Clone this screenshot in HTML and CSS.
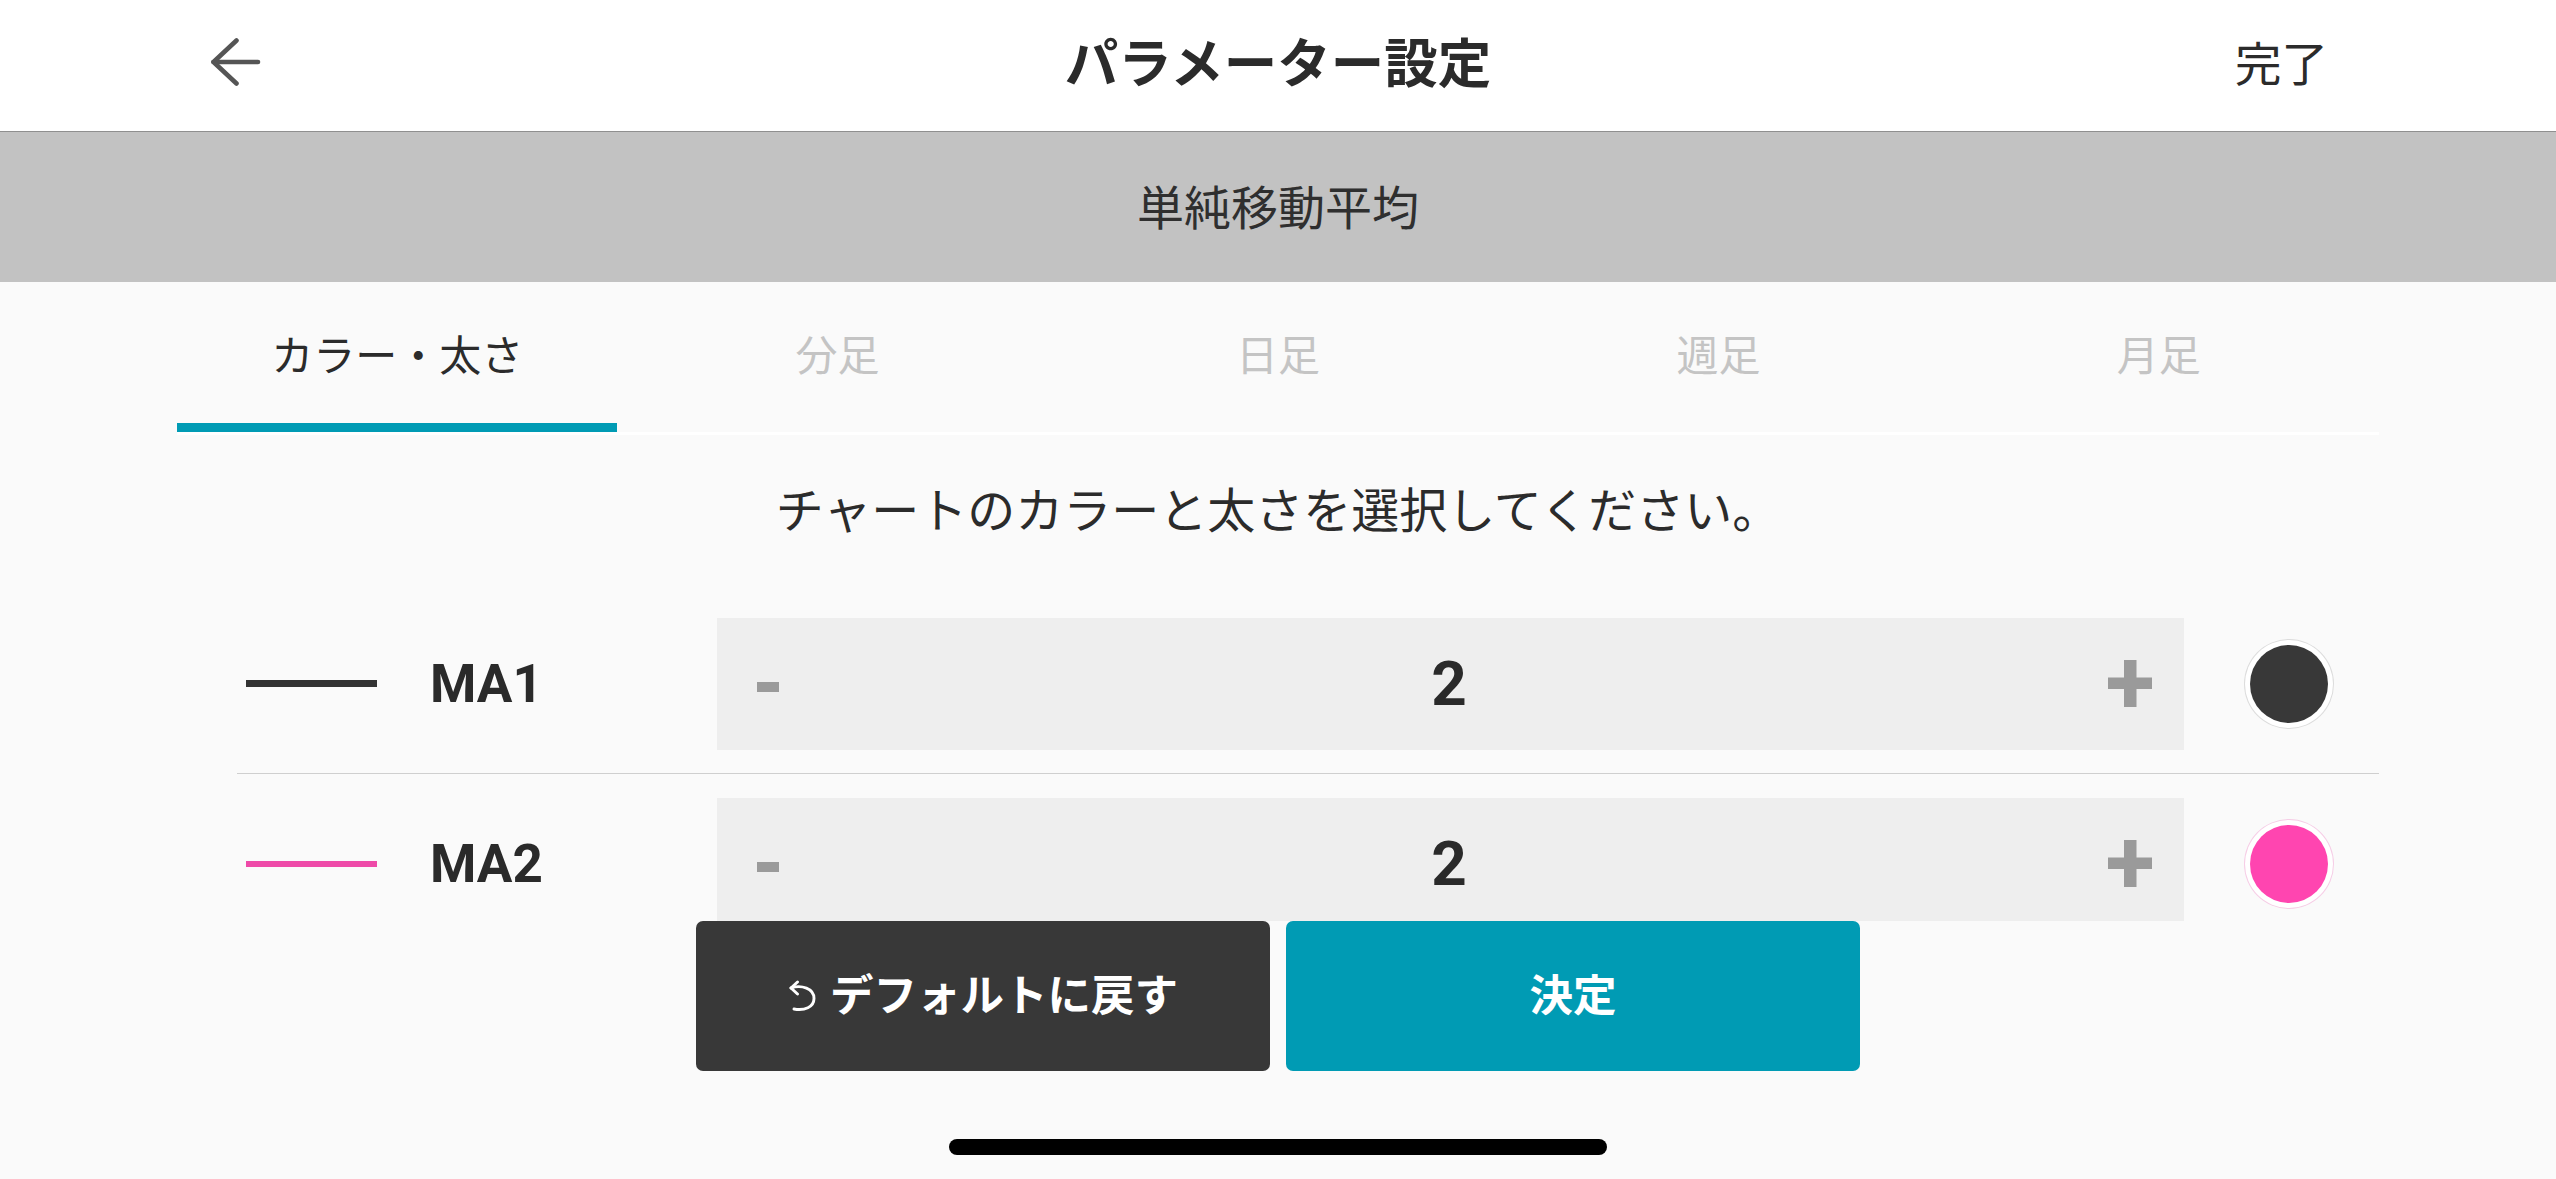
FILE: index.html
```html
<!DOCTYPE html>
<html lang="ja">
<head>
<meta charset="utf-8">
<title>パラメーター設定</title>
<link rel="stylesheet" href="styles.css">
</head>
<body>
<div class="screen">
  <header class="nav">
    <div class="nav-left">
      <svg class="back" width="50" height="50" viewBox="0 0 50 50" fill="none" stroke="#555" stroke-width="4.6" stroke-linecap="round" stroke-linejoin="round">
        <path d="M2.5 24H47"/>
        <path d="M25.5 2.5L2.5 24L25.5 45.5"/>
      </svg>
    </div>
    <h1 class="nav-title">パラメーター設定</h1>
    <div class="nav-right">完了</div>
  </header>

  <div class="band"><span class="band-text">単純移動平均</span></div>

  <main class="content">
    <nav class="tabs">
      <div class="tab active"><span class="tab-label">カラー・太さ</span></div>
      <div class="tab"><span class="tab-label">分足</span></div>
      <div class="tab"><span class="tab-label">日足</span></div>
      <div class="tab"><span class="tab-label">週足</span></div>
      <div class="tab"><span class="tab-label">月足</span></div>
    </nav>

    <p class="hint">チャートのカラーと太さを選択してください。</p>

    <div class="rows">
      <div class="row">
        <span class="swatch swatch-dark"></span>
        <span class="ma">MA1</span>
        <div class="stepper">
          <svg class="minus" width="22" height="10" viewBox="0 0 22 10"><rect width="22" height="10" fill="#9a9a9a"/></svg>
          <span class="value">2</span>
          <svg class="plus" width="44" height="47" viewBox="0 0 44 47"><rect x="0" y="17.5" width="44" height="11.5" fill="#9a9a9a"/><rect x="16" y="0" width="12.5" height="47" fill="#9a9a9a"/></svg>
        </div>
        <span class="dot dot-dark"></span>
      </div>
      <div class="row">
        <span class="swatch swatch-pink"></span>
        <span class="ma">MA2</span>
        <div class="stepper">
          <svg class="minus" width="22" height="10" viewBox="0 0 22 10"><rect width="22" height="10" fill="#9a9a9a"/></svg>
          <span class="value">2</span>
          <svg class="plus" width="44" height="47" viewBox="0 0 44 47"><rect x="0" y="17.5" width="44" height="11.5" fill="#9a9a9a"/><rect x="16" y="0" width="12.5" height="47" fill="#9a9a9a"/></svg>
        </div>
        <span class="dot dot-pink"></span>
      </div>
    </div>
  </main>

  <footer class="footer">
    <div class="actions">
      <button class="btn btn-reset">
        <svg class="reset-icon" width="28" height="32" viewBox="0 0 28 32" fill="none" stroke="#fff" stroke-width="2.9" stroke-linecap="round" stroke-linejoin="round">
          <path d="M3 8C13.5 4.5 26 8.5 26 18.5C26 27 16.5 31 6 29"/>
          <path d="M9.5 2L3 8L9.5 14"/>
        </svg>
        <span class="btn-label">デフォルトに戻す</span>
      </button>
      <button class="btn btn-ok"><span class="btn-label">決定</span></button>
    </div>
    <div class="home-bar"></div>
  </footer>
</div>
</body>
</html>
```

FILE: styles.css
```css
* {
  box-sizing: border-box;
}

html, body {
  margin: 0;
  padding: 0;
}

body {
  width: 2556px;
  height: 1179px;
  overflow: hidden;
  background: #fafafa;
  font-family: "Noto Sans CJK JP", "Noto Sans", sans-serif;
  color: #333;
}

.screen {
  display: flex;
  flex-direction: column;
  height: 1179px;
}

/* Header */
.nav {
  height: 132px;
  background: #fff;
  border-bottom: 1px solid #8f8f8f;
  display: grid;
  grid-template-columns: 1fr auto 1fr;
  align-items: center;
  flex: none;
}

.nav-left {
  padding-left: 211px;
  display: flex;
  align-items: center;
}

.back {
  display: block;
  margin-top: -6px;
}

.nav-title {
  margin: -12px 0 0;
  font-size: 53.5px;
  font-weight: 700;
  color: #2b2b2b;
  line-height: 1;
}

.nav-right {
  justify-self: end;
  padding-right: 228px;
  font-size: 46.5px;
  color: #2b2b2b;
  line-height: 1;
  margin-top: -8px;
}

/* Gray band */
.band {
  height: 150px;
  background: #c2c2c2;
  display: flex;
  align-items: center;
  justify-content: center;
  flex: none;
}

.band-text {
  font-size: 47px;
  line-height: 1;
  color: #2f2f2f;
  margin-top: -5px;
}

/* Scroll content */
.content {
  height: 639px;
  overflow: hidden;
  flex: none;
}

.tabs {
  margin: 0 177px;
  display: grid;
  grid-template-columns: repeat(5, 1fr);
  border-bottom: 3px solid #fff;
}

.tab {
  height: 150px;
  display: flex;
  align-items: center;
  justify-content: center;
  color: #c4c4c4;
}

.tab-label {
  font-size: 42px;
  line-height: 1;
  margin-top: -8px;
}

.tab.active {
  color: #2b2b2b;
  box-shadow: inset 0 -9px 0 #009bb4;
}

.hint {
  margin: 0;
  height: 159px;
  padding-bottom: 16px;
  display: flex;
  align-items: center;
  justify-content: center;
  font-size: 48px;
  color: #2b2b2b;
}

.rows {
  margin: 0 177px 0 237px;
}

.row {
  height: 180px;
  display: flex;
  align-items: center;
  padding-left: 9px;
  border-bottom: 1px solid #cfcfcf;
}

.swatch {
  width: 131px;
  flex: none;
}

.swatch-dark {
  height: 7px;
  background: #333;
}

.swatch-pink {
  height: 6px;
  background: #ee4aa8;
}

.ma {
  width: 287px;
  margin-left: 53px;
  font-family: Roboto, "Liberation Sans", sans-serif;
  font-weight: 700;
  font-size: 53px;
  color: #2a2a2a;
  flex: none;
}

.stepper {
  width: 1467px;
  height: 132px;
  background: #eeeeee;
  display: grid;
  grid-template-columns: 1fr auto 1fr;
  align-items: center;
  padding: 0 36px;
  flex: none;
}

.minus {
  justify-self: start;
  margin-top: 6px;
  margin-left: 4px;
}

.plus {
  justify-self: end;
  margin-right: -4px;
}

.value {
  font-family: Roboto, "Liberation Sans", sans-serif;
  font-weight: 700;
  font-size: 62px;
  color: #2a2a2a;
  line-height: 1;
  margin-left: -3px;
}

.dot {
  width: 78px;
  height: 78px;
  border-radius: 50%;
  margin-left: 66px;
  flex: none;
}

.dot-dark {
  background: #383838;
  box-shadow: 0 0 0 5px #fff, 0 0 0 6px #dcdcdc;
}

.dot-pink {
  background: #ff45b0;
  box-shadow: 0 0 0 5px #fff, 0 0 0 6px #f6cde6;
}

/* Footer */
.footer {
  flex: 1;
  display: flex;
  flex-direction: column;
  align-items: center;
}

.actions {
  display: flex;
  gap: 16px;
}

.btn {
  width: 574px;
  height: 150px;
  border: none;
  border-radius: 7px;
  color: #fff;
  font-family: "Noto Sans CJK JP", sans-serif;
  font-weight: 700;
  font-size: 43.5px;
  display: flex;
  align-items: center;
  justify-content: center;
  gap: 14px;
  padding: 0;
}

.btn-label {
  line-height: 1;
  margin-top: -7px;
}

.btn-reset {
  background: #383838;
}

.btn-ok {
  background: #009bb4;
}

.reset-icon {
  display: block;
  margin-top: 0;
}

.home-bar {
  margin-top: 68px;
  width: 658px;
  height: 16px;
  border-radius: 8px;
  background: #000;
}
```
